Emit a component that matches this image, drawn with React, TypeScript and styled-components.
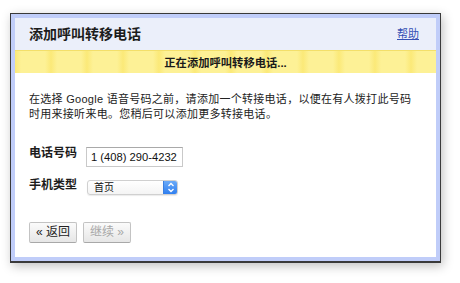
import styled, { createGlobalStyle } from 'styled-components';

const GlobalStyle = createGlobalStyle`
  html, body {
    margin: 0;
    padding: 0;
    background: #fff;
  }
  body {
    font-family: "Liberation Sans", "Noto Sans CJK SC", sans-serif;
    color: #222;
  }
`;

const Page = styled.div`
  width: 460px;
  height: 283px;
  padding: 13px 0 0 10px;
  box-sizing: border-box;
`;

const Dialog = styled.div`
  width: 431px;
  height: 250px;
  box-sizing: border-box;
  border: 1px solid #3a3a3a;
  border-bottom-width: 2px;
  box-shadow: 2px 3px 10px rgba(0, 0, 0, 0.25);
  background: #c0cdf9;
  padding: 4px;
  display: flex;
`;

const Inner = styled.div`
  flex: 1;
  background: #fff;
  display: flex;
  flex-direction: column;
`;

const Header = styled.div`
  height: 32px;
  background: #ebeffa;
  display: flex;
  align-items: center;
  justify-content: space-between;
  padding: 0 17px 0 14px;
`;

const Title = styled.div`
  font-size: 14px;
  font-weight: bold;
  color: #1c1c1c;
  line-height: 16px;
`;

const HelpLink = styled.a`
  font-size: 11px;
  color: #3550b4;
  text-decoration: underline;
  line-height: 14px;
`;

const Notice = styled.div`
  height: 23px;
  box-sizing: border-box;
  border-top: 1px solid #f3df6a;
  background: repeating-linear-gradient(
    90deg,
    #fbe978 0px,
    #fdf196 6px,
    #fdf196 30px,
    #fbe978 36px
  );
  display: flex;
  align-items: center;
  justify-content: center;
  font-size: 11.3px;
  font-weight: bold;
  color: #1a1a1a;
`;

const Body = styled.div`
  padding: 19px 14px 0;
  display: flex;
  flex-direction: column;
`;

const Intro = styled.p`
  margin: 0;
  font-size: 11px;
  letter-spacing: 0.28px;
  line-height: 15px;
  color: #222;
`;

const Form = styled.div`
  margin-top: 25px;
  display: grid;
  grid-template-columns: 57px auto;
  row-gap: 13px;
  align-items: start;
`;

const Label = styled.div<{ $shift?: number }>`
  font-size: 12px;
  font-weight: bold;
  line-height: 14px;
  margin-top: ${p => p.$shift ?? 0}px;
  color: #1c1c1c;
`;

const TextInput = styled.input`
  width: 97px;
  height: 20px;
  box-sizing: border-box;
  border: 1px solid #c9c9c9;
  border-top-color: #a9a9a9;
  padding: 0 4px;
  font-family: "Liberation Sans", sans-serif;
  font-size: 11.2px;
  color: #111;
  outline: none;
  justify-self: start;
`;

const SelectBox = styled.div`
  width: 91px;
  height: 15px;
  box-sizing: border-box;
  border: 1px solid #d0d0d0;
  border-radius: 3px;
  display: flex;
  overflow: hidden;
  background: linear-gradient(#ffffff, #f4f4f4);
  box-shadow: 0 1px 1px rgba(0, 0, 0, 0.08);
  justify-self: start;
  margin-left: 1px;
`;

const SelectValue = styled.span`
  flex: 1;
  font-size: 10px;
  line-height: 13px;
  padding-left: 6px;
  color: #111;
`;

const Stepper = styled.span`
  width: 13px;
  background: linear-gradient(#6aaaf8, #2f7ff0);
  display: flex;
  align-items: center;
  justify-content: center;
  border-left: 1px solid #3b7fe0;
`;

const Actions = styled.div`
  margin-top: 27px;
  display: flex;
  gap: 6px;
`;

const Button = styled.button<{ $disabled?: boolean }>`
  height: 21px;
  width: 48px;
  box-sizing: border-box;
  border: 1px solid #c3c3c3;
  border-bottom-color: #a8a8a8;
  border-radius: 2px;
  background: linear-gradient(#fbfbfb, #e6e6e6);
  font-family: "Liberation Sans", "Noto Sans CJK SC", sans-serif;
  font-size: 12px;
  line-height: 19px;
  padding: 0;
  color: ${p => (p.$disabled ? '#a8a8a8' : '#222')};
  display: flex;
  align-items: center;
  justify-content: center;
  gap: 3px;
`;

export default function App() {
  return (
    <Page>
      <GlobalStyle />
      <Dialog>
        <Inner>
          <Header>
            <Title>添加呼叫转移电话</Title>
            <HelpLink href="#">帮助</HelpLink>
          </Header>
          <Notice>正在添加呼叫转移电话...</Notice>
          <Body>
            <Intro>
              在选择 Google 语音号码之前，请添加一个转接电话，以便在有人拨打此号码
              <br />
              时用来接听来电。您稍后可以添加更多转接电话。
            </Intro>
            <Form>
              <Label $shift={-1}>电话号码</Label>
              <TextInput defaultValue="1 (408) 290-4232" />
              <Label $shift={-2}>手机类型</Label>
              <SelectBox>
                <SelectValue>首页</SelectValue>
                <Stepper>
                  <svg width="8" height="11" viewBox="0 0 8 11">
                    <path d="M1.5 4 L4 1.5 L6.5 4" fill="none" stroke="#fff" strokeWidth="1.3" />
                    <path d="M1.5 7 L4 9.5 L6.5 7" fill="none" stroke="#fff" strokeWidth="1.3" />
                  </svg>
                </Stepper>
              </SelectBox>
            </Form>
            <Actions>
              <Button>« 返回</Button>
              <Button $disabled>继续 »</Button>
            </Actions>
          </Body>
        </Inner>
      </Dialog>
    </Page>
  );
}
